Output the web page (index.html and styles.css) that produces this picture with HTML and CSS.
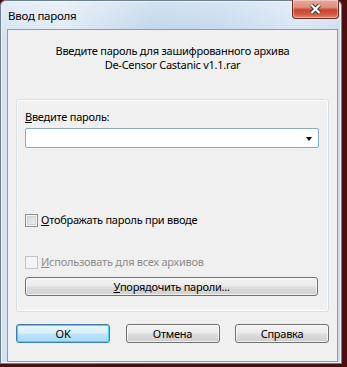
FILE: index.html
```html
<!DOCTYPE html>
<html lang="ru">
<head>
<meta charset="utf-8">
<title>Ввод пароля</title>
<link rel="stylesheet" href="styles.css">
</head>
<body>
<div class="window">
  <div class="titlebar">
    <span class="title">Ввод пароля</span>
    <div class="close">
      <svg width="13" height="12" viewBox="0 0 13 12">
        <path d="M2.5 2 L10.5 10 M10.5 2 L2.5 10" stroke="#3b3b3b" stroke-width="4" fill="none"/>
        <path d="M2.5 2 L10.5 10 M10.5 2 L2.5 10" stroke="#ffffff" stroke-width="2.2" fill="none"/>
      </svg>
    </div>
  </div>
  <div class="client">
    <div class="message">
      <div>Введите пароль для зашифрованного архива</div>
      <div>De-Censor Castanic v1.1.rar</div>
    </div>
    <div class="group">
      <div class="label"><u>В</u>ведите пароль:</div>
      <div class="combo"><span class="arrow"></span></div>
      <div class="check check-show"><span class="box"></span><span><u>О</u>тображать пароль при вводе</span></div>
      <div class="check check-all disabled"><span class="box"></span><span><u>И</u>спользовать для всех архивов</span></div>
      <div class="btn btn-wide"><u>У</u>порядочить пароли...</div>
    </div>
    <div class="buttons">
      <div class="btn btn-default">OK</div>
      <div class="btn">Отмена</div>
      <div class="btn">Справка</div>
    </div>
  </div>
</div>
</body>
</html>
```
FILE: styles.css
```css
html, body {
  margin: 0;
  padding: 0;
}
body {
  width: 347px;
  height: 367px;
  background: #4a1010;
  font-family: "Noto Sans", "Open Sans", sans-serif;
  font-size: 11px;
  letter-spacing: -0.25px;
  color: #000;
  overflow: hidden;
}
.window {
  width: 342px;
  height: 364px;
  box-sizing: border-box;
  padding: 0 4px 2px 7px;
  border-radius: 6px 6px 0 0;
  background:
    linear-gradient(180deg, rgba(255,255,255,0.35) 0px, rgba(255,255,255,0) 40px),
    linear-gradient(90deg, #d3e3f3 0%, #dfeaf6 18%, #bcd3ea 45%, #c2d7ed 65%, #d6e5f4 88%, #cadcef 100%);
  box-shadow: inset 0 0 0 1px #6c7f95, inset 0 0 0 2px rgba(255,255,255,0.6);
  display: flex;
  flex-direction: column;
  position: relative;
}
.titlebar {
  height: 29px;
  flex: none;
}
.title {
  display: block;
  padding: 8px 0 0 1px;
  line-height: 15px;
  font-size: 11.5px;
  color: #000;
}
.close {
  position: absolute;
  top: 0;
  right: 3px;
  width: 47px;
  height: 19px;
  box-sizing: border-box;
  border: 1px solid #6b2b22;
  border-top: none;
  border-radius: 0 0 4px 4px;
  background: linear-gradient(180deg, #e9a99b 0%, #df8f7e 40%, #c9452f 55%, #cf5b45 80%, #e08a72 100%);
  box-shadow: inset 0 0 0 1px rgba(255,255,255,0.35);
  display: flex;
  align-items: center;
  justify-content: center;
}
.close svg {
  display: block;
}
.client {
  flex: 1;
  background: #f0f0f0;
  border: 1px solid #8b9db2;
  display: flex;
  flex-direction: column;
  align-items: stretch;
}
.message {
  padding-top: 14px;
  text-align: center;
  line-height: 14px;
}
.group {
  margin: 27px 8px 0 8px;
  height: 213px;
  box-sizing: border-box;
  border: 1px solid #d5dfe5;
  border-radius: 3px;
  box-shadow: inset 0 0 0 1px #fff;
  padding: 10px 0 0 8px;
  display: flex;
  flex-direction: column;
  align-items: flex-start;
}
.label {
  line-height: 14px;
}
.combo {
  margin-top: 4px;
  width: 294px;
  height: 20px;
  box-sizing: border-box;
  border: 1px solid #88acd0;
  border-radius: 2px;
  background: #fff;
  position: relative;
}
.arrow {
  position: absolute;
  right: 6px;
  top: 8px;
  width: 0;
  height: 0;
  border-left: 3.5px solid transparent;
  border-right: 3.5px solid transparent;
  border-top: 4px solid #000;
}
.check {
  display: flex;
  align-items: center;
  gap: 3px;
  line-height: 14px;
}
.check-show {
  margin-top: 65px;
}
.check-all {
  margin-top: 28px;
}
.box {
  width: 13px;
  height: 13px;
  box-sizing: border-box;
  border: 1px solid #8e8f8f;
  background: linear-gradient(135deg, #cbcfd5 0%, #f6f6f6 100%);
  box-shadow: inset 0 0 0 1px #f4f4f4, inset 0 0 0 2px #d0d2d6;
}
.disabled {
  color: #8d8d8d;
}
.disabled .box {
  border-color: #c3c3c3;
  background: #f4f4f4;
  box-shadow: none;
}
.btn {
  height: 19px;
  box-sizing: border-box;
  border: 1px solid #707070;
  border-radius: 3px;
  background: linear-gradient(180deg, #f2f2f2 0%, #ebebeb 48%, #dddddd 52%, #cfcfcf 100%);
  box-shadow: inset 0 0 0 1px rgba(255,255,255,0.7);
  display: flex;
  align-items: center;
  justify-content: center;
  line-height: 14px;
}
.btn-wide {
  margin-top: 8px;
  width: 293px;
}
.buttons {
  margin: 12px 8px 0 8px;
  display: flex;
  justify-content: space-between;
}
.buttons .btn {
  width: 94px;
}
.btn-default {
  border-color: #3c7fb1;
  background: linear-gradient(180deg, #eaf6fd 0%, #d9f0fc 48%, #bee6fd 52%, #a7d9f5 100%);
  box-shadow: inset 0 0 0 1px #48d1f9;
}
u {
  text-decoration: underline;
  text-underline-offset: 1px;
}
```
